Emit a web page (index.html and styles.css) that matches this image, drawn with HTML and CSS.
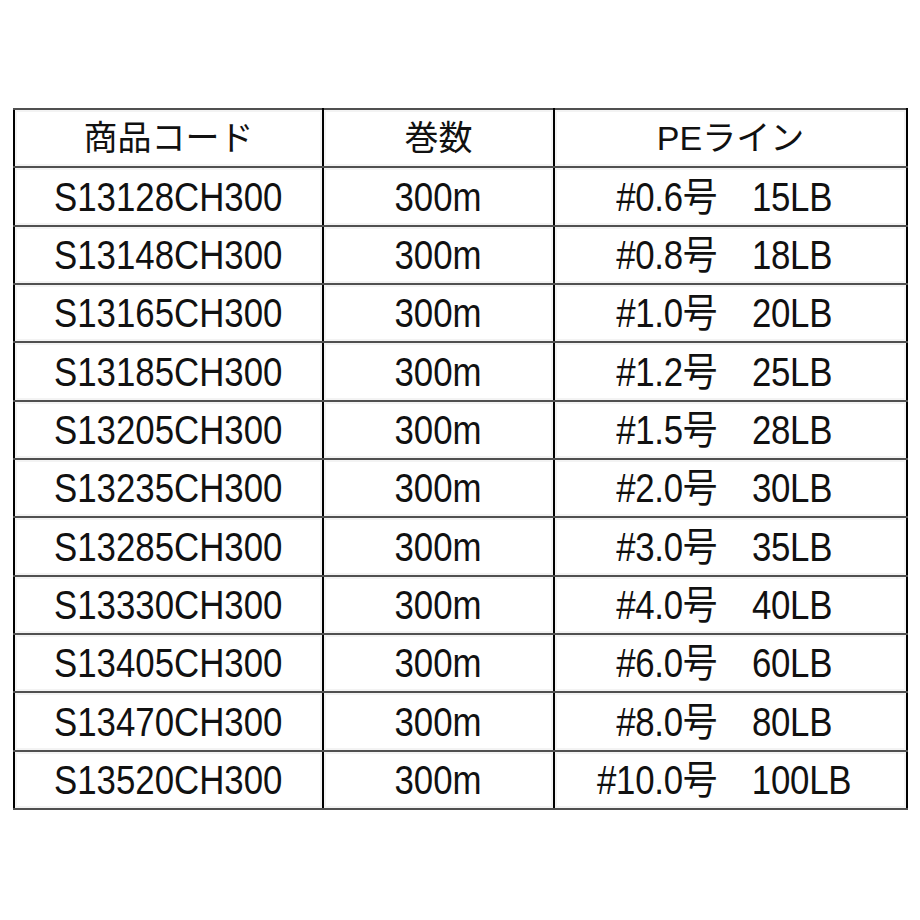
FILE: index.html
```html
<!DOCTYPE html>
<html lang="ja">
<head>
<meta charset="utf-8">
<title>PEライン</title>
<link rel="stylesheet" href="styles.css">
</head>
<body>
<div class="wrap">
<table class="spec">
  <colgroup>
    <col class="c1"><col class="c2"><col class="c3">
  </colgroup>
  <thead>
    <tr><th><span class="hd">商品コード</span></th><th><span class="hd">巻数</span></th><th><span class="hd">PEライン</span></th></tr>
  </thead>
  <tbody>
    <tr><td><span class="t">S13128CH300</span></td><td><span class="t">300m</span></td><td class="pe"><span class="t">#0.6号　15LB</span></td></tr>
    <tr><td><span class="t">S13148CH300</span></td><td><span class="t">300m</span></td><td class="pe"><span class="t">#0.8号　18LB</span></td></tr>
    <tr><td><span class="t">S13165CH300</span></td><td><span class="t">300m</span></td><td class="pe"><span class="t">#1.0号　20LB</span></td></tr>
    <tr><td><span class="t">S13185CH300</span></td><td><span class="t">300m</span></td><td class="pe"><span class="t">#1.2号　25LB</span></td></tr>
    <tr><td><span class="t">S13205CH300</span></td><td><span class="t">300m</span></td><td class="pe"><span class="t">#1.5号　28LB</span></td></tr>
    <tr><td><span class="t">S13235CH300</span></td><td><span class="t">300m</span></td><td class="pe"><span class="t">#2.0号　30LB</span></td></tr>
    <tr><td><span class="t">S13285CH300</span></td><td><span class="t">300m</span></td><td class="pe"><span class="t">#3.0号　35LB</span></td></tr>
    <tr><td><span class="t">S13330CH300</span></td><td><span class="t">300m</span></td><td class="pe"><span class="t">#4.0号　40LB</span></td></tr>
    <tr><td><span class="t">S13405CH300</span></td><td><span class="t">300m</span></td><td class="pe"><span class="t">#6.0号　60LB</span></td></tr>
    <tr><td><span class="t">S13470CH300</span></td><td><span class="t">300m</span></td><td class="pe"><span class="t">#8.0号　80LB</span></td></tr>
    <tr><td><span class="t">S13520CH300</span></td><td><span class="t">300m</span></td><td class="pe"><span class="t">#10.0号　100LB</span></td></tr>
  </tbody>
</table>
</div>
</body>
</html>
```
FILE: styles.css
```css
html, body {
  margin: 0;
  padding: 0;
  background: #ffffff;
}
.wrap {
  padding: 108px 0 0 13px;
}
.spec {
  border-collapse: collapse;
  table-layout: fixed;
  width: 893px;
  font-family: "Liberation Sans", "Noto Sans CJK JP", sans-serif;
  color: #111111;
}
.c1 { width: 309px; }
.c2 { width: 231px; }
.c3 { width: 353px; }
.spec th,
.spec td {
  height: 56.35px;
  padding: 0;
  text-align: center;
  vertical-align: middle;
  border-top: 2px solid #505050;
  border-bottom: 2px solid #505050;
  border-left: 2px solid #000000;
  border-right: 2px solid #000000;
  box-shadow: inset 0 0 0 2px #f3f3f3;
  font-weight: normal;
}
.spec td.pe {
  padding-right: 12px;
}
.t {
  display: inline-block;
  font-size: 40px;
  line-height: 1;
  transform: scaleX(0.87);
  white-space: nowrap;
  margin: 0 -20px;
}
.pe .t {
  word-spacing: -6px;
  letter-spacing: -0.3px;
}
.hd {
  display: inline-block;
  font-size: 34px;
  line-height: 1;
  white-space: nowrap;
}
```
